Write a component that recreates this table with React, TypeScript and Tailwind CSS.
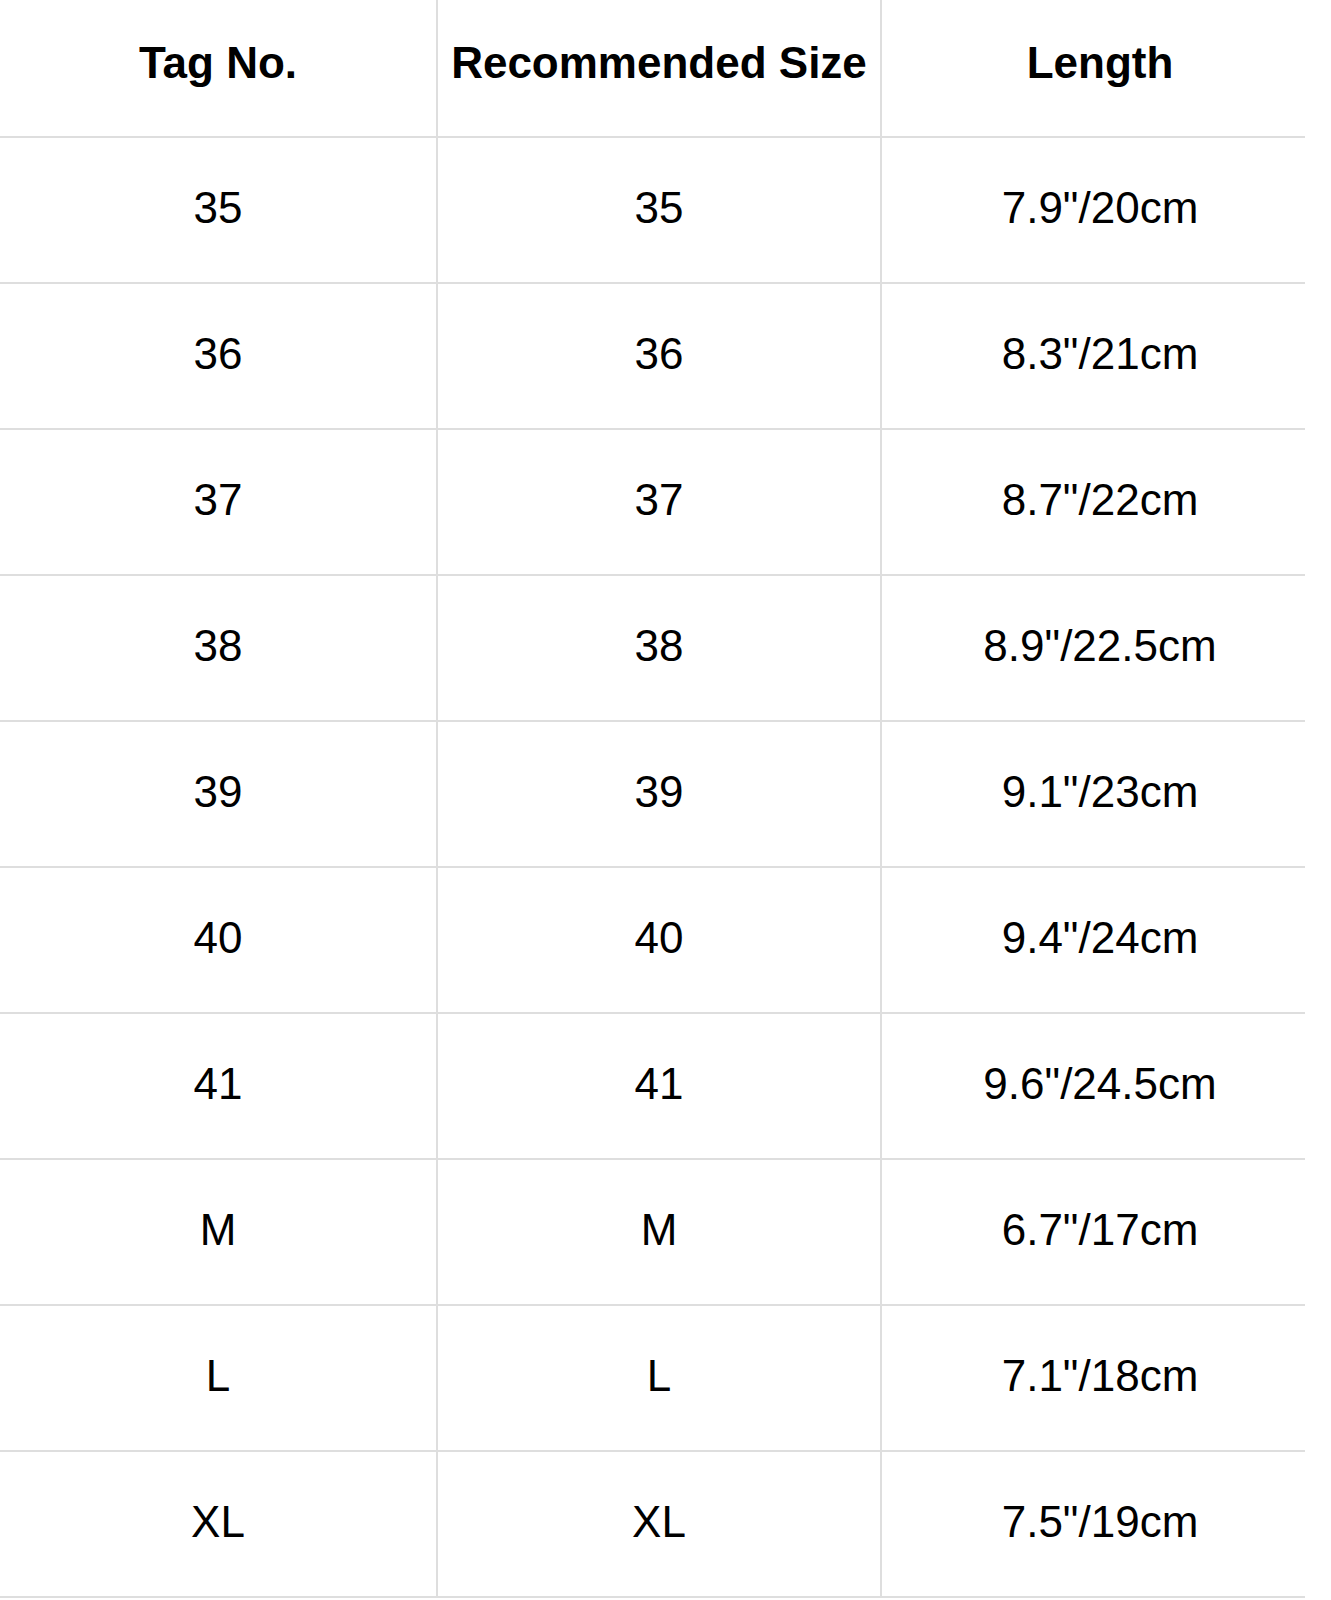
import React from "react";

const rows = [
  ["35", "35", "7.9\"/20cm"],
  ["36", "36", "8.3\"/21cm"],
  ["37", "37", "8.7\"/22cm"],
  ["38", "38", "8.9\"/22.5cm"],
  ["39", "39", "9.1\"/23cm"],
  ["40", "40", "9.4\"/24cm"],
  ["41", "41", "9.6\"/24.5cm"],
  ["M", "M", "6.7\"/17cm"],
  ["L", "L", "7.1\"/18cm"],
  ["XL", "XL", "7.5\"/19cm"],
];

const Row = ({ cells, head = false }: { cells: string[]; head?: boolean }) => {
  const h = head ? "h-[136px] pb-[10px]" : "h-[144px] pb-[4px]";
  const text = head ? "font-bold" : "font-normal";
  return (
    <div className={`flex w-[1305px] border-b-2 border-[#dedede] text-[44px] leading-none text-black ${text}`}>
      <div className={`flex w-[438px] items-center justify-center border-r-2 border-[#dedede] ${h}`}>{cells[0]}</div>
      <div className={`flex w-[444px] items-center justify-center border-r-2 border-[#dedede] ${h}`}>{cells[1]}</div>
      <div className={`flex w-[423px] items-center justify-center pl-[13px] ${h}`}>{cells[2]}</div>
    </div>
  );
};

const SizeChart = () => {
  return (
    <div className="min-h-[1600px] w-full bg-white font-['Liberation_Sans',Arial,sans-serif]">
      <Row cells={["Tag No.", "Recommended Size", "Length"]} head />
      {rows.map((r) => (
        <Row key={r[0]} cells={r} />
      ))}
    </div>
  );
};

export default SizeChart;
